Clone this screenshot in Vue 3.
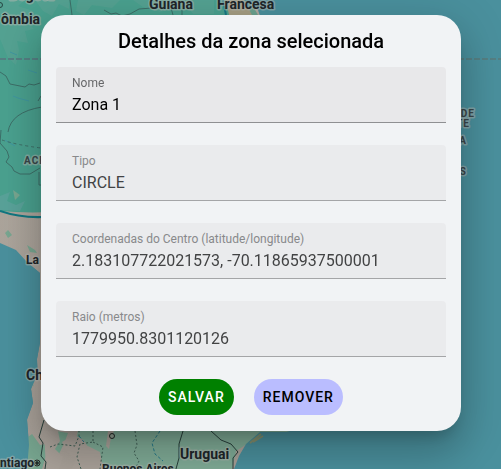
<script setup>
import { reactive } from 'vue'

const fields = reactive([
  { id: 'nome', label: 'Nome', value: 'Zona 1', disabled: false },
  { id: 'tipo', label: 'Tipo', value: 'CIRCLE', disabled: true },
  { id: 'centro', label: 'Coordenadas do Centro (latitude/longitude)', value: '2.183107722021573, -70.11865937500001', disabled: true },
  { id: 'raio', label: 'Raio (metros)', value: '1779950.8301120126', disabled: true }
])
</script>

<template>
  <main class="page">
    <svg class="map" viewBox="0 0 501 469" preserveAspectRatio="xMidYMid slice" aria-hidden="true">
      <defs>
        <linearGradient id="land" x1="0" y1="0" x2="0" y2="1">
          <stop offset="0" stop-color="#b0a99f" />
          <stop offset="1" stop-color="#a8a098" />
        </linearGradient>
        <clipPath id="zone"><path d="M0 0H236L225 30L180 190Q80 218 0 211Z" /></clipPath>
      </defs>
      <rect width="501" height="469" fill="#4a909d" />
      <path fill="url(#land)" d="M0 0H218L226 7L237 5L250 9L257 7L262 22L280 60L270 430L262 439L247 447L241 458L236 469H27L29 446L27 420L33 403L31 389L37 372L37 359L40 342L40 273L27 262L16 250L0 243Z" />
      <g clip-path="url(#zone)">
        <rect width="280" height="220" fill="#4aa18f" />
        <path fill="#5ca495" opacity=".6" d="M0 0H25L18 6L33 11L24 18L34 29L25 31L28 43L17 41L19 50L16 65L8 58L0 39ZM35 0H69V9L59 4L52 16L43 11ZM78 0H120L112 8L92 5L84 15L76 11ZM133 0H214V14H193L186 5L160 12L143 7Z" />
        <path fill="#5ca39b" opacity=".8" d="M0 196L10 192L7 201L16 205L25 201L20 211L0 210Z" />
        <path fill="none" stroke="#4096a0" d="M10 52l7 3m-4 41l5 2 11 3M5 140l10 6m13-76l9 3" />
      </g>
      <path fill="#6ba28f" d="M248 12l5-6 5 9h-10z" />
      <path fill="#a69e83" d="M226 0h18l8 15h-23z" />
      <path d="M223 0L226 15" stroke="#177783" stroke-width="2" />
      <path d="M0 211Q20 218 44 217" fill="none" stroke="#107781" stroke-width="2" />
      <path fill="#78a690" d="M8 230l4 5-4 3-3-5zM27 245l8 5 2 3-7-1zM13 190l7 5-5 5zM35 360l-5 15 4 12-5-8zM28 437l4-3 8 11 8-1-2 12-4 13H27zM56 431l12 2-3 8-6 13-5 4-4-17z" />
      <path fill="#80ac97" d="M78 431H290L250 442L236 451L232 469H107L100 460L92 458L87 445L76 439Z" />
      <path fill="#aaa29a" d="M44 431h14l2 10-5 8 8 8-4 12H46zM62 442l12-7 10 5 6 12-4 7-13-2-8-8zM79 449l9-3 12 6 3 17H72zM108 431h6l-3 7-2 11-3-3z" />
      <path fill="#4a909d" d="M0 245l16 7 10 10 14 11v70l-3 16 1 14-7 16 2 14-6 16 2 26-2 24H0z" />
      <path fill="#4a909d" d="M260 432l-14 12-7 12-5 13h60V432z" />
      <path d="M250 443l11-9m-8 8l10-6" stroke="#85906e" stroke-width="2" fill="none" />

      <g fill="none" stroke="#3d6f68" stroke-width="1">
        <path d="M70 0l2 15M0 72l6 4 4 8 15 3 4-3 5 1 6-2M42 107q-31 5-34 25M38 101l3-5M104 10l7 4 5-1 6 3 8-2 9-5 13-1M171 8l2 7m9-5v5" />
        <path d="M1 130l-1 13 7 8 2 6-3 5 6 5 2 4 6 3h10l10-6M39 172v13h4" />
        <path stroke-dasharray="3 3" d="M2 140q15 5 39 8" />
      </g>
      <path fill="none" stroke="#557f83" stroke-width="2" stroke-dasharray="6 2" d="M0 59H41M458 59H501" />
      <g fill="none" stroke="#283f3a" stroke-width="1">
        <path d="M44 420l-5 17 4 6-2 13 5 6-1 7M183 431l-4 13 0 14-3 11M211 431l10 9 10 4 7 8-5 6v11" />
        <path stroke="#405f55" stroke-dasharray="2 2" d="M50 447l8-3 17 2 4-10v-5M93 431v11l-13 2-3 13 4 12M93 442l10 5-3 22M135 431l2 14-3 8 5 8-4 8" />
        <path stroke="#267988" stroke-dasharray="3 2" d="M160 431l-8 12 3 11 8 7M79 436l5 6" />
        <circle cx="112" cy="436" r="2.5" stroke="#202825" fill="#96a295" />
        <circle cx="37" cy="463" r="3" stroke="#252525" />
        <circle cx="37" cy="463" r="1.5" fill="#222" />
        <circle cx="0" cy="5" r="2.5" stroke="#254642" />
      </g>
      <g class="map-text">
        <text x="1" y="24">ômbia</text>
        <text x="9" y="0">Bogotá</text>
        <text x="149" y="9">Guiana</text>
        <text x="217" y="9">Francesa</text>
        <text class="city" x="26" y="264">La Paz</text>
        <text x="26" y="380">Chile</text>
        <text x="180" y="459">Uruguai</text>
        <text class="city" x="0" y="467">ntiago</text>
        <text class="city" x="102" y="473">Buenos Aires</text>
        <g class="region">
          <text x="24" y="164">ACRE</text>
          <text x="475" y="117" text-anchor="end">GRANDE</text>
          <text x="470" y="127" text-anchor="end">NORTE</text>
          <text x="467" y="144" text-anchor="end">PARAÍBA</text>
          <text x="467" y="175" text-anchor="end">ALAGOAS</text>
        </g>
      </g>
    </svg>

    <form class="dialog" role="dialog" aria-labelledby="zone-title" @submit.prevent>
      <h1 id="zone-title" class="title">Detalhes da zona selecionada</h1>
      <div class="fields">
        <div v-for="field in fields" :key="field.id" class="field" :class="{ disabled: field.disabled }">
          <label :for="field.id">{{ field.label }}</label>
          <input :id="field.id" v-model="field.value" type="text" :disabled="field.disabled" />
        </div>
      </div>
      <div class="actions">
        <button class="save" type="submit">SALVAR</button>
        <button class="remove" type="button">REMOVER</button>
      </div>
    </form>
  </main>
</template>

<style>
body {
  margin: 0;
}
</style>

<style scoped>
.page {
  display: flex;
  justify-content: center;
  align-items: flex-start;
  box-sizing: border-box;
  min-height: 100vh;
  padding: 15px 40px 38px 41px;
  overflow: hidden;
  font-family: Roboto, "Liberation Sans", sans-serif;
}

.map {
  position: fixed;
  inset: 0;
  width: 100%;
  height: 100%;
}

.map-text {
  font-size: 14px;
  font-weight: 700;
  fill: #202529;
  stroke: #b4b8b3;
  stroke-opacity: 0.5;
  stroke-width: 3px;
  stroke-linejoin: round;
  paint-order: stroke;
}

.map-text .city {
  font-size: 12px;
}

.map-text .region {
  font-size: 10px;
  letter-spacing: 1px;
  fill: #394649;
}

.dialog {
  position: relative;
  box-sizing: border-box;
  width: 100%;
  max-width: 420px;
  padding: 15px 15px 16px;
  border-radius: 24px;
  background: #f1f3f5;
  box-shadow: 0 11px 15px -7px rgba(0, 0, 0, 0.2), 0 24px 38px 3px rgba(0, 0, 0, 0.14), 0 9px 46px 8px rgba(0, 0, 0, 0.12);
}

.title {
  margin: 0 0 15px;
  font-size: 20px;
  line-height: 22px;
  font-weight: 500;
  text-align: center;
  color: #000;
}

.fields {
  display: grid;
  gap: 22px;
}

.field {
  display: flex;
  flex-direction: column;
  box-sizing: border-box;
  height: 56px;
  padding: 8px 16px 0;
  border-bottom: 1px solid #8f9092;
  border-radius: 4px 4px 0 0;
  background: #e8e8ea;
}

.field label {
  font-size: 12px;
  line-height: 16px;
  color: #666769;
}

.field input {
  width: 100%;
  height: 26px;
  padding: 0;
  border: 0;
  outline: 0;
  background: transparent;
  font: inherit;
  font-size: 16px;
  color: #000;
}

.field.disabled {
  background: #eaebed;
  border-color: #a4a5a7;
}

.field.disabled label {
  color: #88898b;
}

.field.disabled input {
  color: #424344;
}

.actions {
  display: flex;
  justify-content: center;
  gap: 20px;
  margin-top: 22px;
}

.actions button {
  height: 36px;
  padding: 0 9px;
  border: 0;
  border-radius: 18px;
  font: inherit;
  font-size: 14px;
  font-weight: 500;
  letter-spacing: 1px;
}

.actions .save {
  background: #008000;
  color: #fff;
}

.actions .remove {
  background: #babdff;
  color: #000;
}
</style>
